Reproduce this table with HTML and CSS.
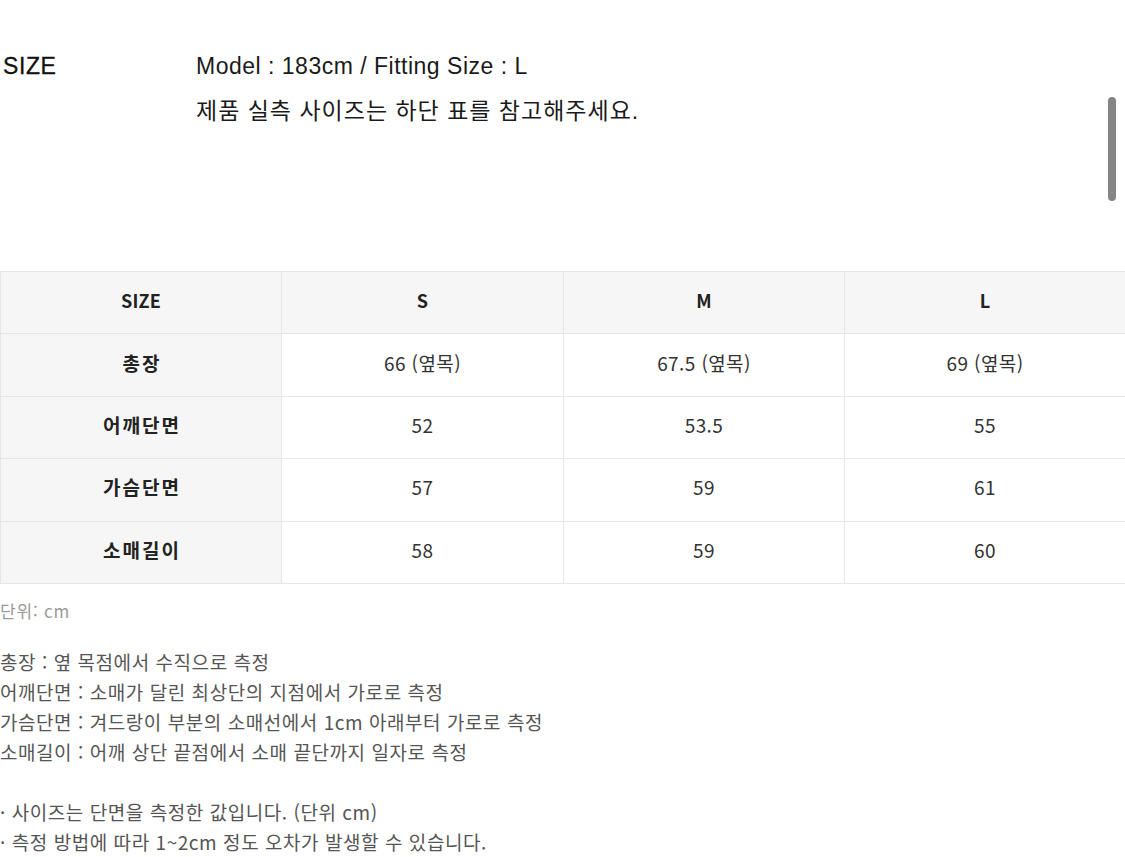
FILE: index.html
```html
<!DOCTYPE html>
<html lang="ko">
<head>
<meta charset="utf-8">
<link rel="stylesheet" href="styles.css">
</head>
<body>
<div class="page">
  <section class="intro">
    <div class="intro-label">SIZE</div>
    <div class="intro-text">
      <p class="intro-line">Model : 183cm / Fitting Size : L</p>
      <p class="intro-line ko">제품 실측 사이즈는 하단 표를 참고해주세요.</p>
    </div>
  </section>

  <table class="size-table">
    <colgroup>
      <col class="c1"><col class="c2"><col class="c3"><col class="c4">
    </colgroup>
    <thead>
      <tr><th>SIZE</th><th>S</th><th>M</th><th>L</th></tr>
    </thead>
    <tbody>
      <tr><th>총장</th><td>66 (옆목)</td><td>67.5 (옆목)</td><td>69 (옆목)</td></tr>
      <tr><th>어깨단면</th><td>52</td><td>53.5</td><td>55</td></tr>
      <tr><th>가슴단면</th><td>57</td><td>59</td><td>61</td></tr>
      <tr><th>소매길이</th><td>58</td><td>59</td><td>60</td></tr>
    </tbody>
  </table>

  <p class="unit">단위: cm</p>

  <div class="notes">
    <p>총장 : 옆 목점에서 수직으로 측정</p>
    <p>어깨단면 : 소매가 달린 최상단의 지점에서 가로로 측정</p>
    <p>가슴단면 : 겨드랑이 부분의 소매선에서 1cm 아래부터 가로로 측정</p>
    <p>소매길이 : 어깨 상단 끝점에서 소매 끝단까지 일자로 측정</p>
  </div>

  <div class="notes bullets">
    <p>· 사이즈는 단면을 측정한 값입니다. (단위 cm)</p>
    <p>· 측정 방법에 따라 1~2cm 정도 오차가 발생할 수 있습니다.</p>
  </div>

  <div class="scrollbar"></div>
</div>
</body>
</html>
```

FILE: styles.css
```css
html, body {
  margin: 0;
  padding: 0;
  background: #fff;
}
body {
  font-family: "Noto Sans CJK KR", "Noto Sans", sans-serif;
  color: #222;
  overflow: hidden;
}
.page {
  position: relative;
  width: 1125px;
  height: 857px;
}
p { margin: 0; }

.intro {
  display: flex;
  padding-top: 44px;
  height: 271px;
  box-sizing: border-box;
}
.intro-label {
  width: 193px;
  padding-left: 3px;
  font-family: "Liberation Sans", "Noto Sans CJK KR", sans-serif;
  font-size: 23px;
  line-height: 45px;
  letter-spacing: 0.6px;
  color: #111;
  -webkit-text-stroke: 0.3px #111;
}
.intro-text {
  display: flex;
  flex-direction: column;
}
.intro-line {
  font-family: "Liberation Sans", "Noto Sans CJK KR", sans-serif;
  font-size: 23px;
  line-height: 45px;
  letter-spacing: 0.5px;
  color: #1a1a1a;
}
.intro-line.ko {
  letter-spacing: 1px;
}

.size-table {
  width: 1125px;
  table-layout: fixed;
  border-collapse: collapse;
  font-size: 19px;
}
.size-table .c1 { width: 281px; }
.size-table .c2 { width: 282px; }
.size-table .c3 { width: 281px; }
.size-table .c4 { width: 281px; }
.size-table th,
.size-table td {
  height: 55.4px;
  border: 1px solid #e6e6e6;
  text-align: center;
  vertical-align: middle;
  padding: 0 0 6px;
}
.size-table th {
  background: #f6f6f6;
  font-weight: 700;
  color: #222;
}
.size-table thead th {
  font-size: 18px;
  letter-spacing: 0.2px;
}
.size-table tbody th {
  font-size: 19px;
  letter-spacing: 2px;
  padding-left: 2px;
}
.size-table td {
  color: #333;
  font-weight: 400;
  letter-spacing: 0.4px;
}

.unit {
  margin-top: 15px;
  font-size: 17px;
  line-height: 24px;
  color: #9a9a9a;
  letter-spacing: 0.8px;
}
.notes {
  margin-top: 24px;
  font-size: 19px;
  line-height: 30px;
  color: #555;
  letter-spacing: 0.55px;
}
.notes.bullets {
  margin-top: 30px;
}

.scrollbar {
  position: absolute;
  left: 1108px;
  top: 97px;
  width: 8px;
  height: 104px;
  border-radius: 4px;
  background: #858585;
}
```
